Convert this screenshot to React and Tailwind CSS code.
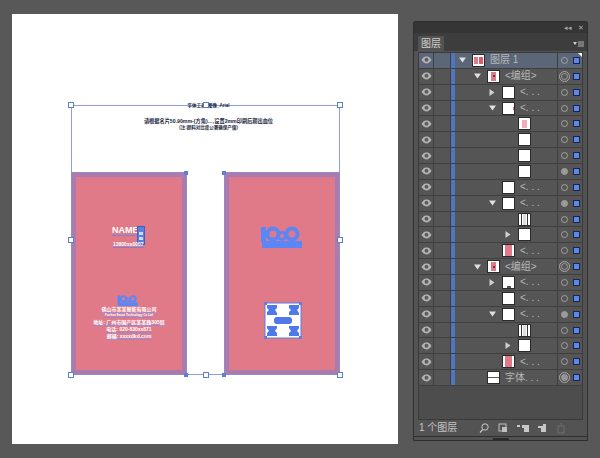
import React from 'react';

const FONT = "font-['Liberation_Sans','Noto_Sans_CJK_SC',sans-serif]";

const LEVELS = ['pl-[2px]', 'pl-[17px]', 'pl-[32px]', 'pl-[48px]'];

const rows = [
    { level: 0, arrow: 'down', thumb: 'layer', label: '图层 1', selected: true },
    { level: 1, arrow: 'down', thumb: 'group', label: '<编组>', dot: 'double' },
    { level: 2, arrow: 'right', thumb: 'white', label: '<. . .' },
    { level: 2, arrow: 'down', thumb: 'speck', label: '<. . .' },
    { level: 3, thumb: 'tiny' },
    { level: 3, thumb: 'white' },
    { level: 3, thumb: 'white' },
    { level: 3, thumb: 'white', dot: 'filled' },
    { level: 2, thumb: 'white', label: '<. . .' },
    { level: 2, arrow: 'down', thumb: 'white', label: '<. . .', dot: 'filled' },
    { level: 3, thumb: 'bars' },
    { level: 3, arrow: 'right', thumb: 'white' },
    { level: 2, thumb: 'pink', label: '<. . .' },
    { level: 1, arrow: 'down', thumb: 'group2', label: '<编组>', dot: 'double' },
    { level: 2, arrow: 'right', thumb: 'dots', label: '<. . .' },
    { level: 2, thumb: 'white', label: '<. . .' },
    { level: 2, arrow: 'down', thumb: 'white', label: '<. . .', dot: 'filled' },
    { level: 3, thumb: 'bars' },
    { level: 3, arrow: 'right', thumb: 'white' },
    { level: 2, thumb: 'pink', label: '<. . .' },
    { level: 1, thumb: 'type', label: '字体. . .', dot: 'doubleFilled' },
];

const Eye = () => (
    <svg width="11" height="8" viewBox="0 0 11 8">
        <path d="M0.5 4 C2.5 1 4 0.6 5.5 0.6 C7 0.6 8.5 1 10.5 4 C8.5 7 7 7.4 5.5 7.4 C4 7.4 2.5 7 0.5 4 Z" fill="#b4b4b4" />
        <circle cx="5.5" cy="3.8" r="2" fill="#5f5f5f" />
    </svg>
);

const Arrow = ({ dir }) => {
    if (dir === 'down') {
        return (
            <svg width="7" height="6" viewBox="0 0 7 6">
                <path d="M0 0.5 H7 L3.5 5.5 Z" fill="#e0e0e0" />
            </svg>
        );
    }
    if (dir === 'right') {
        return (
            <svg width="6" height="7" viewBox="0 0 6 7">
                <path d="M0.5 0 V7 L5.5 3.5 Z" fill="#d0d0d0" />
            </svg>
        );
    }
    return null;
};

const Thumb = ({ kind }) => (
    <div className="w-[13px] h-[13px] shrink-0 bg-white border border-[#2a2a2a] flex items-center justify-center gap-px overflow-hidden relative">
        {kind === 'layer' && (
            <>
                <div className="w-[4px] h-[7px] bg-[#e07a88]" />
                <div className="w-[4px] h-[7px] bg-[#d8606f]" />
            </>
        )}
        {(kind === 'group' || kind === 'group2') && (
            <div className="w-[5px] h-[9px] bg-[#e07a88] flex items-center justify-center">
                <div className="w-[2px] h-[2px] bg-[#6b3a44]" />
            </div>
        )}
        {kind === 'tiny' && <div className="w-[5px] h-[8px] bg-[#eeb0b8]" />}
        {kind === 'speck' && <div className="absolute right-0 top-[4px] w-px h-[3px] bg-[#e07a88]" />}
        {kind === 'pink' && <div className="w-[7px] h-full bg-[#e07a88]" />}
        {kind === 'bars' && (
            <div className="w-[7px] h-full border-x border-[#333] flex justify-center">
                <div className="w-[3px] h-full bg-[#ddd]" />
            </div>
        )}
        {kind === 'dots' && <div className="absolute bottom-0 left-[4px] w-[4px] h-[2px] bg-[#555]" />}
        {kind === 'type' && <div className="w-full h-px bg-[#555]" />}
    </div>
);

const Target = ({ dot }) => {
    if (dot === 'double' || dot === 'doubleFilled') {
        return (
            <div className="w-[11px] h-[11px] rounded-full border border-[#a8a8a8] flex items-center justify-center">
                <div className={`w-[7px] h-[7px] rounded-full border border-[#9c9c9c] ${dot === 'doubleFilled' ? 'bg-[#949494]' : ''}`} />
            </div>
        );
    }
    return (
        <div className={`w-[7px] h-[7px] rounded-full border border-[#a0a0a0] ${dot === 'filled' ? 'bg-[#9a9a9a]' : ''}`} />
    );
};

const LayerRow = ({ row }) => (
    <div className={`flex h-[15.86px] border-b border-[#3f3f3f] relative ${row.selected ? 'bg-[#5b6679]' : 'bg-[#555555]'}`}>
        <div className="w-[15px] flex items-center justify-center border-r border-[#3f3f3f]">
            <Eye />
        </div>
        <div className="w-[17px] border-r border-[#3f3f3f]" />
        <div className="w-[4px] bg-[#4f74c0]" />
        <div className={`flex-1 flex items-center min-w-0 ${LEVELS[row.level]}`}>
            <div className="w-[15px] shrink-0 flex items-center pl-[2px]">
                <Arrow dir={row.arrow} />
            </div>
            <Thumb kind={row.thumb} />
            {row.label && (
                <span className="ml-[5px] text-[10px] leading-none text-[#b8b8b8] whitespace-nowrap">{row.label}</span>
            )}
        </div>
        <div className="w-[25px] shrink-0 flex items-center border-l border-[#3f3f3f]">
            <div className="w-[13px] flex justify-center">
                <Target dot={row.dot} />
            </div>
            <div className="w-[7px] h-[7px] ml-[2px] bg-[#5f86e8] border border-[#16264d]" />
        </div>
        {row.selected && (
            <div className="absolute right-0 top-0 w-0 h-0 border-t-[4px] border-l-[4px] border-t-white border-l-transparent" />
        )}
    </div>
);

const Handle = ({ className }) => (
    <div className={`absolute w-[6px] h-[6px] bg-white border border-[#5f7fc8] ${className}`} />
);

const Node = ({ className }) => (
    <div className={`absolute w-[4px] h-[4px] bg-[#5f7fd8] ${className}`} />
);

const Card = ({ className, children }) => (
    <div className={`absolute top-[158px] w-[116px] h-[203px] bg-[#e07a88] border-[4px] border-[#b07aa8] ${className}`}>
        <div className="absolute -inset-[4px] border border-[#8a8ed0]" />
        <div className="absolute inset-0 border border-[#a07cc0]" />
        {children}
    </div>
);

const LogoMark = ({ className, width, height }) => (
    <svg className={className} width={width} height={height} viewBox="0 0 42 22">
        <rect x="0" y="1" width="5" height="15" fill="#5b86f5" />
        <circle cx="12" cy="8" r="5.5" fill="none" stroke="#5b86f5" strokeWidth="4" />
        <circle cx="21" cy="10" r="3.5" fill="none" stroke="#5b86f5" strokeWidth="3" />
        <circle cx="31" cy="8" r="5.5" fill="none" stroke="#5b86f5" strokeWidth="4" />
        <rect x="1" y="15" width="40" height="7" fill="#5b86f5" />
    </svg>
);

const CardLine = ({ className, children }) => (
    <div className={`text-white font-bold leading-none whitespace-nowrap text-center border-b border-[#8a8be0] ${className}`}>
        {children}
    </div>
);

const Artboard = () => (
    <div className="relative ml-[12px] mt-[14px] w-[386px] h-[430px] bg-white shrink-0">
        <div className="absolute left-[59px] top-[91px] w-[269px] h-[270px] border border-[#8da0d8]" />

        <div className="absolute left-[59px] top-[90px] w-[269px] text-center text-[#20263c] font-bold leading-none whitespace-nowrap">
            <div className="text-[4.5px] pl-[6px]">字体工具_图像_Arial</div>
            <div className="text-[5.2px] mt-[10px] pl-[6px]">请根据名片50.90mm-(方角)…,设置2mm印刷后期出血位</div>
            <div className="text-[4.5px] mt-[2px] pl-[6px]">(注:颜料对比度公署确保产值)</div>
        </div>

        <Card className="left-[59px]">
            <div className="absolute left-[37px] top-[50px] text-[9px] leading-none text-white font-bold border-b border-[#6f86e0]">NAME</div>
            <div className="absolute left-[62px] top-[50px] w-[8px] h-[19px] bg-[#5b7fe0] border border-[#3f5fc0] flex flex-col items-center justify-center gap-[2px]">
                <div className="w-[4px] h-[3px] bg-white/70" />
                <div className="w-[4px] h-[3px] bg-white/70" />
            </div>
            <div className="absolute left-[38px] top-[66px] text-[5px] leading-none text-white font-bold border-b border-[#6f86e0]">13800xx0007</div>
            <LogoMark className="absolute left-[39px] top-[119px]" width={28} height={11} />
            <div className="absolute left-0 right-0 top-[131px] flex flex-col items-center gap-px">
                <CardLine className="text-[5px]">佛山市某某智能有限公司</CardLine>
                <CardLine className="text-[3px]">Foshan Smart Technology Co Ltd</CardLine>
                <CardLine className="text-[5px] mt-px">地址: 广州市国产区某某路305层</CardLine>
                <CardLine className="text-[5px]">电话: 020-830xx871</CardLine>
                <CardLine className="text-[5px]">邮箱: xxxxdkd.com</CardLine>
            </div>
        </Card>

        <Card className="left-[212px]">
            <LogoMark className="absolute left-[33px] top-[50px]" width={42} height={22} />
            <svg className="absolute left-[36px] top-[126px]" width="38" height="37" viewBox="0 0 38 37">
                <rect x="1" y="1" width="36" height="35" fill="white" stroke="#5b7fe0" />
                <g fill="#4f78ea">
                    <path d="M3 3 H13 V6 L11 8 L13 11 V13 H3 V10 L5 8 L3 6 Z" />
                    <path d="M25 3 H35 V6 L33 8 L35 11 V13 H25 V10 L27 8 L25 6 Z" />
                    <path d="M3 24 H13 V26 L11 29 L13 31 V34 H3 V31 L5 29 L3 26 Z" />
                    <path d="M25 24 H35 V26 L33 29 L35 31 V34 H25 V31 L27 29 L25 26 Z" />
                    <rect x="10" y="15" width="18" height="7" rx="3" />
                </g>
                <g fill="#5b7fe0">
                    <rect x="0" y="0" width="3" height="3" />
                    <rect x="35" y="0" width="3" height="3" />
                    <rect x="0" y="34" width="3" height="3" />
                    <rect x="35" y="34" width="3" height="3" />
                </g>
            </svg>
        </Card>

        <Handle className="left-[56px] top-[88px]" />
        <Handle className="left-[191px] top-[88px]" />
        <Handle className="left-[325px] top-[88px]" />
        <Handle className="left-[56px] top-[223px]" />
        <Handle className="left-[325px] top-[223px]" />
        <Handle className="left-[56px] top-[358px]" />
        <Handle className="left-[191px] top-[358px]" />
        <Handle className="left-[325px] top-[358px]" />
        <Node className="left-[172px] top-[157px]" />
        <Node className="left-[210px] top-[157px]" />
        <Node className="left-[172px] top-[359px]" />
        <Node className="left-[210px] top-[359px]" />
    </div>
);

const LayersPanel = () => (
    <div className="ml-[15px] mt-[21px] w-[175px] h-[420px] shrink-0 flex flex-col bg-[#535353] border border-[#2e2e2e] rounded-t-[2px]">
        <div className="h-[11px] bg-[#353535] flex items-center justify-end gap-[6px] pr-[3px] text-[7px] leading-none text-[#a8a8a8]">
            <span>◂◂</span>
            <span>✕</span>
        </div>
        <div className="h-[18px] bg-[#3d3d3d] flex items-end pl-[4px] pr-[3px]">
            <div className="w-[26px] h-[15px] bg-[#535353] text-[10px] leading-[15px] text-center text-[#cfcfcf]">图层</div>
            <div className="flex-1 flex items-center justify-end h-[15px] gap-px">
                <div className="w-0 h-0 border-x-[2px] border-t-[3px] border-x-transparent border-t-[#d0d0d0]" />
                <div className="w-[6px] h-[6px] bg-[#777]" />
            </div>
        </div>
        <div className="flex-1 mx-[4px] mt-px flex flex-col bg-[#4d4d4d] border border-[#3a3a3a]">
            {rows.map((row, idx) => (
                <LayerRow key={idx} row={row} />
            ))}
        </div>
        <div className="h-[16px] flex items-center pl-[5px] text-[10px] leading-none text-[#c4c4c4]">
            <span className="w-[60px]">1 个图层</span>
            <svg width="90" height="12" viewBox="0 0 90 12">
                <circle cx="6" cy="5" r="3.2" fill="none" stroke="#c8c8c8" strokeWidth="1" />
                <path d="M3.6 7.6 L1 10.5" stroke="#c8c8c8" strokeWidth="1.2" />
                <rect x="20" y="2" width="7" height="7" fill="none" stroke="#c0c0c0" />
                <rect x="23" y="5" width="5" height="5" fill="#c0c0c0" />
                <path d="M38 3 H41 V5 H38 Z M43 3 H50 V10 H45 V6 H43 Z" fill="#c8c8c8" />
                <path d="M59 4 H64 V2 H67 V10 H62 V6 H59 Z" fill="#c8c8c8" />
                <path d="M78 4 H86 M79 5 V11 H85 V5 M81 2 H83" fill="none" stroke="#6e6e6e" />
            </svg>
        </div>
        <div className="h-[4px] flex justify-center items-center border-t border-[#2e2e2e]">
            <div className="w-[16px] h-[2px] bg-[#2a2a2a]" />
        </div>
    </div>
);

const App = () => (
    <div className={`w-[600px] h-[458px] flex items-start bg-[#585858] overflow-hidden ${FONT}`}>
        <Artboard />
        <LayersPanel />
    </div>
);

export default App;
